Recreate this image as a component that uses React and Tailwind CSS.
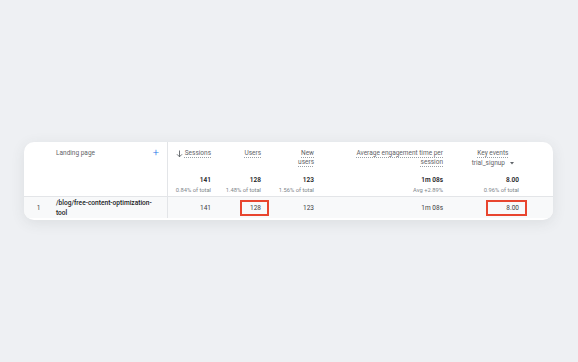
import React from 'react';

const cols = 'grid grid-cols-[28px_116px_47px_50px_53px_129px_76px_30px]';
const dotted = 'underline decoration-dotted decoration-[#9aa0a6] underline-offset-[2px]';

const Marked = ({ children, left }) => (
  <span className="relative inline-block">
    {children}
    <span className={`absolute ${left} -right-[8px] -top-[3px] -bottom-[3px] border-2 border-[#e8452f]`} />
  </span>
);

export default () => {
  return (
    <div className="w-[578px] h-[362px] bg-[#eef0f3] pt-[142px] pl-[24px] font-['Roboto',sans-serif] text-[6.5px]">
      <div className="w-[529px] rounded-[10px] bg-white shadow-[0_3px_14px_rgba(60,64,67,0.10)] pb-[2px] overflow-hidden">
        {/* header */}
        <div className={`${cols} h-[30px] leading-[9px] text-[#5f6368]`}>
          <div />
          <div className="flex justify-between pl-[4px] pr-[8px] pt-[7px] border-r border-[#e3e5e8]">
            <span>Landing page</span>
            <span className="text-[#1a73e8] text-[11px] leading-[8px] font-light">+</span>
          </div>
          <div className="flex justify-end items-start pr-[4px] pt-[7px]">
            <svg width="7" height="8" viewBox="0 0 7 8" className="mr-[2px] mt-[0.5px]">
              <path d="M3.5 0.5v6.5M1 4.3l2.5 2.5 2.5-2.5" stroke="#5f6368" strokeWidth="0.9" fill="none" />
            </svg>
            <span className={dotted}>Sessions</span>
          </div>
          <div className="text-right pr-[4px] pt-[7px]"><span className={dotted}>Users</span></div>
          <div className="text-right pr-[4px] pt-[7px]"><span className={dotted}>New<br />users</span></div>
          <div className="text-right pr-[4px] pt-[7px]">
            <span className={dotted}>Average engagement time per<br />session</span>
          </div>
          <div className="flex flex-col items-end pr-[9px] pt-[7px]">
            <div className="flex flex-col items-center">
              <span className={dotted}>Key events</span>
              <span className="flex items-center mt-[0.5px]">
                trial_signup
                <svg width="4" height="3" viewBox="0 0 4 3" className="ml-[5px]">
                  <path d="M0 0h4L2 2.4z" fill="#5f6368" />
                </svg>
              </span>
            </div>
          </div>
          <div />
        </div>
        {/* totals */}
        <div className={`${cols} h-[25px] border-b border-[#e3e5e8]`}>
          <div />
          <div className="border-r border-[#e3e5e8]" />
          {[
            ['141', '0.84% of total'],
            ['128', '1.48% of total'],
            ['123', '1.56% of total'],
            ['1m 08s', 'Avg +2.89%'],
            ['8.00', '0.96% of total'],
          ].map(([v, s], i) => (
            <div key={i} className="flex flex-col items-end pr-[4px] pt-[4px]">
              <span className="font-semibold text-[#202124] leading-[9px]">{v}</span>
              <span className="text-[#80868b] text-[5.8px] leading-[9px] mt-[0.5px]">{s}</span>
            </div>
          ))}
          <div />
        </div>
        {/* data row */}
        <div className={`${cols} h-[21px] bg-[#f8f9fa] text-[#3c4043] leading-[10px]`}>
          <div className="flex items-center justify-center pl-[1px]">1</div>
          <div className="flex items-center pl-[4px] font-medium text-[6.6px] text-[#202124] border-r border-[#e3e5e8]">
            /blog/free-content-optimization-<br />tool
          </div>
          <div className="flex items-center justify-end pr-[4px]">141</div>
          <div className="flex items-center justify-end pr-[4px]"><Marked left="-left-[10px]">128</Marked></div>
          <div className="flex items-center justify-end pr-[4px]">123</div>
          <div className="flex items-center justify-end pr-[4px]">1m 08s</div>
          <div className="flex items-center justify-end pr-[4px]"><Marked left="-left-[20px]">8.00</Marked></div>
          <div />
        </div>
      </div>
    </div>
  );
}
